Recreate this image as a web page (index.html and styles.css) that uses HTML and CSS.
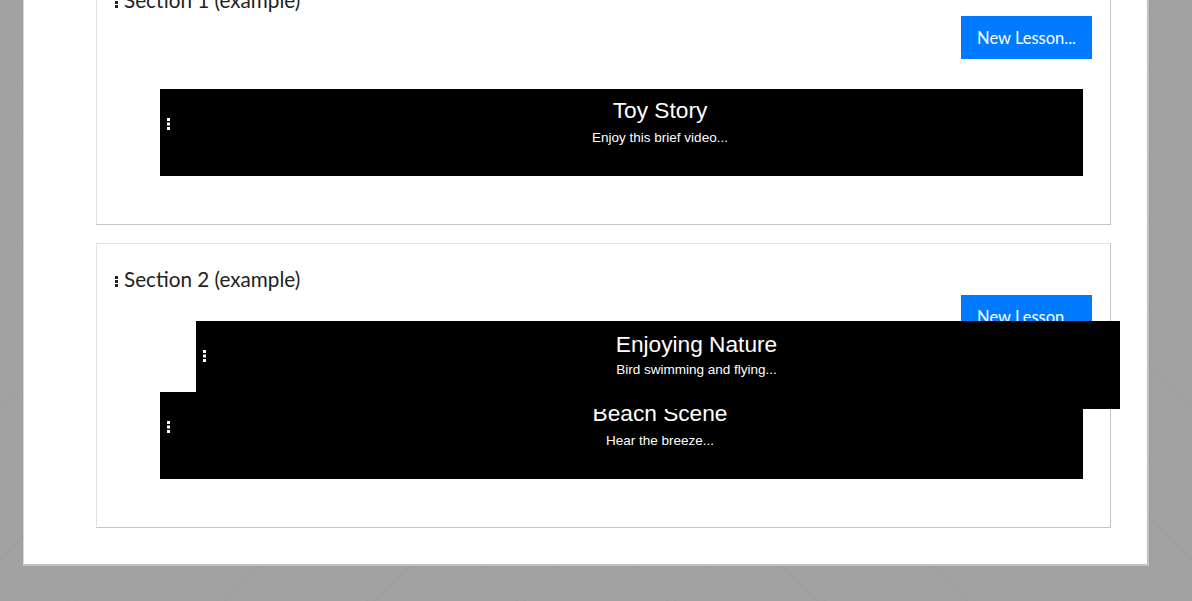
FILE: index.html
```html
<!DOCTYPE html>
<html lang="en">
<head>
<meta charset="utf-8">
<title>Sections</title>
<link rel="stylesheet" href="styles.css">
</head>
<body>
<div class="panel">
  <section class="card">
    <h2 class="card-title"><svg class="grip" width="3" height="11" viewBox="0 0 3 11"><rect x="0" y="0" width="3" height="3"/><rect x="0" y="4" width="3" height="3"/><rect x="0" y="8" width="3" height="3"/></svg>Section 1 (example)</h2>
    <div class="card-actions"><button class="btn">New Lesson...</button></div>
    <div class="lessons">
      <div class="lesson">
        <svg class="grip grip-light" width="3" height="12" viewBox="0 0 3 12"><rect x="0" y="0" width="3" height="3"/><rect x="0" y="4.5" width="3" height="3"/><rect x="0" y="9" width="3" height="3"/></svg>
        <div class="lesson-body">
          <div class="lesson-title">Toy Story</div>
          <div class="lesson-desc">Enjoy this brief video...</div>
        </div>
      </div>
    </div>
  </section>
  <section class="card">
    <h2 class="card-title"><svg class="grip" width="3" height="11" viewBox="0 0 3 11"><rect x="0" y="0" width="3" height="3"/><rect x="0" y="4" width="3" height="3"/><rect x="0" y="8" width="3" height="3"/></svg>Section 2 (example)</h2>
    <div class="card-actions"><button class="btn">New Lesson...</button></div>
    <div class="lessons">
      <div class="lesson-placeholder"></div>
      <div class="lesson">
        <svg class="grip grip-light" width="3" height="12" viewBox="0 0 3 12"><rect x="0" y="0" width="3" height="3"/><rect x="0" y="4.5" width="3" height="3"/><rect x="0" y="9" width="3" height="3"/></svg>
        <div class="lesson-body">
          <div class="lesson-title">Beach Scene</div>
          <div class="lesson-desc">Hear the breeze...</div>
        </div>
      </div>
    </div>
    <div class="lesson lesson-helper">
      <svg class="grip grip-light" width="3" height="12" viewBox="0 0 3 12"><rect x="0" y="0" width="3" height="3"/><rect x="0" y="4.5" width="3" height="3"/><rect x="0" y="9" width="3" height="3"/></svg>
      <div class="lesson-body">
        <div class="lesson-title">Enjoying Nature</div>
        <div class="lesson-desc">Bird swimming and flying...</div>
      </div>
    </div>
  </section>
</div>
</body>
</html>
```
FILE: styles.css
```css
html, body {
  margin: 0;
  padding: 0;
}

body {
  background-color: #a2a2a2;
  background-image:
    repeating-linear-gradient(45deg, transparent 0 105px, rgba(0, 0, 0, 0.025) 105px 106px),
    repeating-linear-gradient(-45deg, transparent 0 105px, rgba(0, 0, 0, 0.025) 105px 106px);
  overflow: hidden;
  font-family: Lato, "Open Sans", sans-serif;
}

.panel {
  margin: -60px 0 0 23px;
  width: 1126px;
  box-sizing: border-box;
  background: #fff;
  border-left: 1px solid #d6d6d6;
  border-right: 2px solid #c2c2c2;
  border-bottom: 2px solid #c2c2c2;
  padding: 24px 36px 36px 72px;
  display: flex;
  flex-direction: column;
  gap: 18px;
}

.card {
  position: relative;
  border: 1px solid;
  border-color: #e2e2e2 #c4c4c4 #c4c4c4 #e2e2e2;
  padding: 23px 18px 48px;
}

.card-title {
  margin: 0;
  font-size: 20.7px;
  line-height: 24px;
  font-weight: normal;
  color: #222;
}

.grip {
  display: inline-block;
  fill: #222;
  margin-right: 6px;
  vertical-align: baseline;
}

.card-actions {
  margin-top: 4px;
  display: flex;
  justify-content: flex-end;
}

.btn {
  height: 43px;
  padding: 0 16px;
  border: 0;
  background: #007bff;
  color: #fff;
  font-family: Lato, "Open Sans", sans-serif;
  font-size: 16.5px;
}

.lessons {
  margin-top: 30px;
  display: flex;
  flex-direction: column;
}

.lesson-placeholder {
  height: 24px;
}

.lesson {
  margin: 0 9px 0 45px;
  height: 87px;
  background: #000;
  color: #fff;
  display: flex;
  align-items: flex-start;
  font-family: "Liberation Sans", Arial, sans-serif;
}

.grip-light {
  fill: #fff;
  margin: 29px 0 0 7px;
  flex: none;
}

.lesson-body {
  flex: 1;
  padding: 8px 0 0 67px;
  text-align: center;
}

.lesson-title {
  font-size: 22.7px;
  line-height: 26px;
}

.lesson-desc {
  margin-top: 7px;
  font-size: 13.5px;
  line-height: 16px;
}

.lesson-helper {
  position: absolute;
  left: 99px;
  top: 77px;
  width: 924px;
  height: 88px;
  margin: 0;
  z-index: 2;
}

.lesson-helper .lesson-body {
  padding-top: 10px;
}

.lesson-helper .lesson-desc {
  margin-top: 5px;
}
```
